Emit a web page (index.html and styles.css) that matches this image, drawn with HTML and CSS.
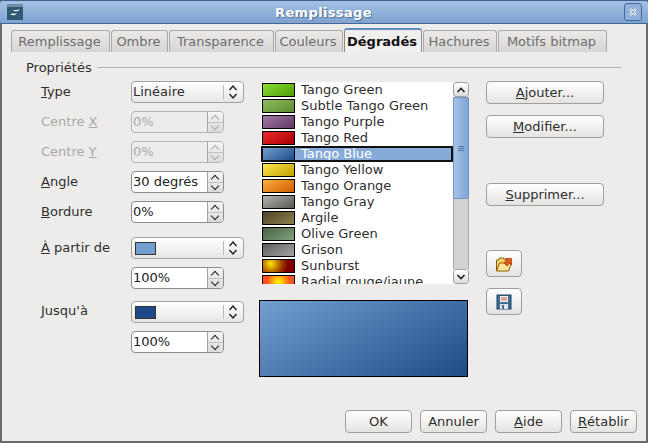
FILE: index.html
```html
<!DOCTYPE html>
<html lang="fr">
<head>
<meta charset="utf-8">
<title>Remplissage</title>
<link rel="stylesheet" href="styles.css">
</head>
<body>
<div class="dialog">
  <header class="titlebar">
    <svg class="appicon" width="16" height="16" viewBox="0 0 16 16"><rect width="16" height="16" fill="#2f5a73"/><rect width="16" height="3" fill="#6d8ea3"/><path d="M3 11c3-3 4 0 7-2l-2 2c-2 1-3-1-5 0zM5 7c3-2 4 0 8-2l-2 2c-3 1-4-1-6 0z" fill="#fff"/></svg>
    <span class="title">Remplissage</span>
    <span class="close"><svg width="14" height="14" viewBox="0 0 14 14"><path d="M4 4l6 6M10 4l-6 6" stroke="#fff" stroke-width="2.4"/><path d="M4 4l6 6M10 4l-6 6" stroke="#3d618c" stroke-width=".6"/></svg></span>
  </header>
  <nav class="tabs">
    <span class="tab w-a">Remplissage</span>
    <span class="tab w-b">Ombre</span>
    <span class="tab w-c">Transparence</span>
    <span class="tab w-d">Couleurs</span>
    <span class="tab active w-e">Dégradés</span>
    <span class="tab w-f">Hachures</span>
    <span class="tab w-g">Motifs bitmap</span>
  </nav>
  <div class="legend"><span>Propriétés</span><i class="rule"></i></div>
  <main class="content">
    <section class="form">
      <div class="row"><label><u>T</u>ype</label>
        <div class="select"><span class="value">Linéaire</span><span class="sep"></span><svg class="updown" width="10" height="16" viewBox="0 0 10 16"><path d="M1.500 6l3.500-4 3.500 4M1.500 10l3.500 4 3.500-4" fill="none" stroke="#222" stroke-width="1.4"/></svg></div></div>
      <div class="row disabled"><label>Centre <u>X</u></label>
        <div class="spin"><span class="field">0%</span><span class="arrows"><b class="up"></b><b class="down"></b></span></div></div>
      <div class="row disabled"><label>Centre <u>Y</u></label>
        <div class="spin"><span class="field">0%</span><span class="arrows"><b class="up"></b><b class="down"></b></span></div></div>
      <div class="row"><label><u>A</u>ngle</label>
        <div class="spin"><span class="field">30 degrés</span><span class="arrows"><b class="up"></b><b class="down"></b></span></div></div>
      <div class="row"><label><u>B</u>ordure</label>
        <div class="spin"><span class="field">0%</span><span class="arrows"><b class="up"></b><b class="down"></b></span></div></div>
      <div class="row gap-top"><label><u>À</u> partir de</label>
        <div class="select"><span class="swatch from"></span><span class="sep"></span><svg class="updown" width="10" height="16" viewBox="0 0 10 16"><path d="M1.500 6l3.500-4 3.500 4M1.500 10l3.500 4 3.500-4" fill="none" stroke="#222" stroke-width="1.4"/></svg></div></div>
      <div class="row"><label></label>
        <div class="spin"><span class="field">100%</span><span class="arrows"><b class="up"></b><b class="down"></b></span></div></div>
      <div class="row gap-top2"><label class="high"><u>J</u>usqu'à</label>
        <div class="select"><span class="swatch to"></span><span class="sep"></span><svg class="updown" width="10" height="16" viewBox="0 0 10 16"><path d="M1.500 6l3.500-4 3.500 4M1.500 10l3.500 4 3.500-4" fill="none" stroke="#222" stroke-width="1.4"/></svg></div></div>
      <div class="row"><label></label>
        <div class="spin"><span class="field">100%</span><span class="arrows"><b class="up"></b><b class="down"></b></span></div></div>
    </section>
    <section class="middle">
      <div class="listbox">
        <ul class="list">
          <li><i class="g g1"></i><span>Tango Green</span></li>
          <li><i class="g g2"></i><span>Subtle Tango Green</span></li>
          <li><i class="g g3"></i><span>Tango Purple</span></li>
          <li><i class="g g4"></i><span>Tango Red</span></li>
          <li class="selected"><i class="g g5"></i><span>Tango Blue</span></li>
          <li><i class="g g6"></i><span>Tango Yellow</span></li>
          <li><i class="g g7"></i><span>Tango Orange</span></li>
          <li><i class="g g8"></i><span>Tango Gray</span></li>
          <li><i class="g g9"></i><span>Argile</span></li>
          <li><i class="g g10"></i><span>Olive Green</span></li>
          <li><i class="g g11"></i><span>Grison</span></li>
          <li><i class="g g12"></i><span>Sunburst</span></li>
          <li class="clipped"><i class="g g13"></i><span>Radial rouge/jaune</span></li>
        </ul>
        <div class="scrollbar">
          <span class="sbtn"><svg width="10" height="6" viewBox="0 0 10 6"><path d="M1.500 5l3.500-3.500 3.500 3.500" fill="none" stroke="#222" stroke-width="1.6"/></svg></span>
          <div class="trough"><div class="thumb"><i></i><i></i><i></i></div></div>
          <span class="sbtn"><svg width="10" height="6" viewBox="0 0 10 6"><path d="M1.500 1l3.500 3.500 3.500-3.500" fill="none" stroke="#222" stroke-width="1.6"/></svg></span>
        </div>
      </div>
      <div class="preview"></div>
    </section>
    <aside class="actions">
      <button class="btn wide"><u>A</u>jouter...</button>
      <button class="btn wide"><u>M</u>odifier...</button>
      <button class="btn wide remove"><u>S</u>upprimer...</button>
      <button class="btn icon first">
        <svg width="18" height="18" viewBox="0 0 18 18"><path d="M1.500 16V5h2l1-2h4l1 2h5v3" fill="#f5d46a" stroke="#8a5a00"/><path d="M1.500 16l3-8h12l-3 8z" fill="#fce29a" stroke="#8a5a00"/><path d="M9 8l3-3-2-1.500h6.500V10L15 8l-3 3z" fill="#e2561c" stroke="#a33208" stroke-width=".7"/></svg>
      </button>
      <button class="btn icon">
        <svg width="16" height="16" viewBox="0 0 16 16"><rect x="1" y="1" width="14" height="14" fill="#3f6f96" stroke="#1f3f5f"/><rect x="4" y="2" width="8" height="6" fill="#f4f4f4"/><path d="M5 4h6M5 6h6" stroke="#d9534f"/><rect x="4" y="10" width="8" height="5" fill="#dfe6ec"/><rect x="6" y="11" width="2" height="4" fill="#3f6f96"/></svg>
      </button>
    </aside>
  </main>
  <footer class="footer">
    <button class="btn foot">OK</button>
    <button class="btn foot">Annuler</button>
    <button class="btn foot"><u>A</u>ide</button>
    <button class="btn foot"><u>R</u>établir</button>
  </footer>
</div>
</body>
</html>
```
FILE: styles.css
```css
* { box-sizing: border-box; }
html, body { margin: 0; padding: 0; }
body { width: 648px; height: 443px; overflow: hidden; font-family: "DejaVu Sans", sans-serif; font-size: 13px; color: #2e2e2e; background: #edeceb; }
.dialog { width: 648px; height: 443px; display: flex; flex-direction: column; background: #edeceb; border-left: 2px solid #6b6b6b; border-right: 2px solid #6b6b6b; border-bottom: 2px solid #6b6b6b; }
.titlebar { height: 24px; margin: 0 -2px; padding: 0 6px 0 7px; display: flex; align-items: center; justify-content: space-between; border-top: 1px solid #3d5f8c; border-bottom: 1px solid #44689a; border-radius: 3px 3px 0 0; background: linear-gradient(#a4c1e2, #7ea3cf); }
.appicon { flex: none; }
.title { font-weight: bold; font-size: 13px; color: #fff; letter-spacing: .35px; text-shadow: 1px 1px 1px #4a6d98; }
.close { width: 18px; height: 18px; display: flex; align-items: center; justify-content: center; border: 1px solid #46699a; border-radius: 3px; background: #8fb0d8; }
.tabs { display: flex; align-items: flex-end; height: 28px; padding-left: 9px; }
.tab { height: 22px; padding-right: 2px; display: flex; align-items: center; justify-content: center; margin-right: 1px; border: 1px solid #aaa8a6; border-bottom: 0; border-radius: 3px 3px 0 0; color: #6d6d6d; background: linear-gradient(#ebeae9, #d6d5d3); }
.tab.active { height: 24px; padding-right: 2px; font-weight: bold; color: #111; background: #f0efee; border-color: #8b8b8b; border-top: 2px solid #5f8cc5; }
.w-a { width: 99px; } .w-b { width: 57px; } .w-c { width: 105px; } .w-d { width: 68px; } .w-e { width: 78px; } .w-f { width: 74px; } .w-g { width: 109px; }
.legend { height: 18px; margin-top: 6px; padding: 0 25px 0 24px; display: flex; align-items: center; gap: 5px; color: #2e2e2e; }
.rule { flex: 1; height: 1px; background: #b3b2b0; }
.content { flex: none; height: 303px; margin-top: 5px; display: flex; }
.form { width: 257px; padding-left: 39px; flex: none; }
.row { height: 22px; margin-bottom: 8px; display: flex; align-items: center; }
.row label { width: 90px; flex: none; padding-bottom: 2px; }
.row label.high { padding-bottom: 4px; }
.row.disabled label, .row.disabled .field { color: #a8a8a8; }
.row.gap-top { margin-top: 14px; }
.row.gap-top2 { margin-top: 12px; }
.select { width: 113px; height: 22px; display: flex; align-items: center; padding: 0 4px 0 1px; border: 1px solid #a3a2a0; border-radius: 4px; background: linear-gradient(#fff, #e7e6e4); color: #2e2e2e; }
.value { flex: 1; padding-bottom: 2px; }
.sep { width: 1px; height: 14px; background: #bbb; margin-left: auto; margin-right: 4px; }
.updown { flex: none; margin-right: 1px; }
.swatch { width: 21px; height: 13px; margin-left: 2px; border: 1px solid #333; }
.swatch.from { background: #729fcf; }
.swatch.to { background: #204a87; }
.spin { width: 93px; height: 22px; display: flex; border: 1px solid #8f8e8c; border-radius: 4px; background: #fff; }
.field { flex: 1; padding-left: 1px; line-height: 19px; color: #222; white-space: nowrap; }
.arrows { width: 16px; flex: none; display: flex; flex-direction: column; border-left: 1px solid #a5a4a2; background: linear-gradient(#f6f5f4, #dcdbd9); border-radius: 0 3px 3px 0; }
.arrows b { flex: 1; position: relative; }
.arrows b::after { content: ""; position: absolute; left: 4px; width: 5px; height: 5px; border: solid #222; border-width: 1.4px 0 0 1.4px; }
.arrows .up::after { top: 4px; transform: rotate(45deg); }
.arrows .down { border-top: 1px solid #c4c3c1; }
.arrows .down::after { top: 0; transform: rotate(225deg); }
.disabled .spin { background: #edeceb; border-color: #b5b4b2; }
.disabled .arrows b::after { border-color: #aaa; }
.middle { width: 227px; flex: none; padding-left: 2px; padding-top: 1px; }
.listbox { display: flex; height: 202px; width: 208px; background: #fff; }
.list { list-style: none; margin: 0; padding: 0; width: 192px; height: 202px; overflow: hidden; }
.list li { height: 16px; display: flex; align-items: center; line-height: 16px; white-space: nowrap; }
.list li.clipped { height: 10px; align-items: flex-start; overflow: hidden; }
.g { width: 33px; height: 14px; margin: 0 6px 0 1px; flex: none; border: 1px solid #000; }
.clipped .g { margin-top: 1px; }
.list span { color: #2e2e2e; }
.list .selected { background: #86abd9; outline: 2px solid #111; outline-offset: -2px; }
.list .selected span { color: #fff; background: #86abd9; }
.g1 { background: linear-gradient(150deg, #8ae234, #4e9a06); }
.g2 { background: linear-gradient(150deg, #8fba5c, #5e8a30); }
.g3 { background: linear-gradient(150deg, #a77ca5, #5c3566); }
.g4 { background: linear-gradient(150deg, #ef2929, #a40000); }
.g5 { background: linear-gradient(150deg, #729fcf, #204a87); }
.g6 { background: linear-gradient(150deg, #fce94f, #c4a000); }
.g7 { background: linear-gradient(150deg, #fcaf3e, #ce5c00); }
.g8 { background: linear-gradient(150deg, #b3b5af, #555753); }
.g9 { background: linear-gradient(150deg, #4d4528, #8f7f4c); }
.g10 { background: linear-gradient(150deg, #4b6044, #7ea37c); }
.g11 { background: linear-gradient(150deg, #5e5e5e, #a3a3a3); }
.g12 { background: radial-gradient(circle at 25% 30%, #ffe600, #a04000 45%, #800000 70%); }
.g13 { background: radial-gradient(circle at 50% 50%, #ffff00, #ff5020 70%); }
.scrollbar { width: 16px; flex: none; height: 202px; display: flex; flex-direction: column; }
.sbtn { height: 15px; flex: none; display: flex; align-items: center; justify-content: center; border: 1px solid #a3a2a0; border-radius: 3px; background: linear-gradient(#fff, #dcdbd9); }
.trough { flex: 1; background: #d3d2d0; border: solid #a9a8a6; border-width: 0 1px; }
.thumb { height: 102px; margin: 0 -1px; border: 1px solid #6f95c4; border-radius: 2px; background: linear-gradient(90deg, #a7c3e6, #7ea5d6); display: flex; flex-direction: column; align-items: center; justify-content: center; gap: 1px; }
.thumb i { width: 6px; height: 1px; background: #4f76a8; }
.preview { width: 209px; height: 77px; margin-top: 16px; margin-left: -2px; border: 1px solid #000; background: linear-gradient(150deg, #729fcf, #204a87); }
.actions { flex: 1; display: flex; flex-direction: column; align-items: flex-start; }
.btn { font: inherit; color: #2e2e2e; padding: 0; border: 1px solid #a09f9d; border-radius: 4px; background: linear-gradient(#fff, #e4e3e1); display: flex; align-items: center; justify-content: center; }
.wide { width: 118px; height: 23px; margin-bottom: 11px; }
.remove { margin-top: 34px; }
.icon { width: 36px; height: 27px; }
.icon.first { margin-top: 33px; margin-bottom: 11px; }
.footer { flex: 1; display: flex; justify-content: flex-start; gap: 8px; padding-left: 343px; padding-top: 26px; }
.foot { width: 67px; height: 23px; }
```
